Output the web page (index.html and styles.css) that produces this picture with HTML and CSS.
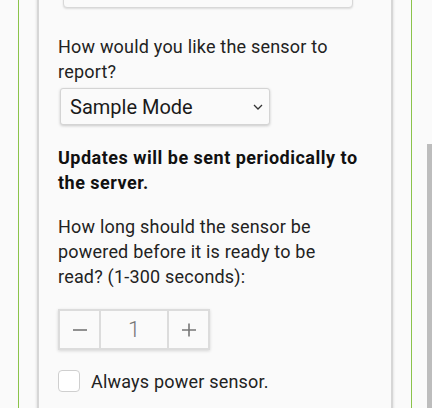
FILE: index.html
```html
<!DOCTYPE html>
<html lang="en">
<head>
    <meta charset="UTF-8">
    <meta name="viewport" content="width=device-width, initial-scale=1.0">
    <title>Sensor Settings</title>
    <link rel="stylesheet" href="styles.css">
</head>
<body>
    <div class="frame">
        <div class="card">
            <div class="field">
                <input type="text" class="text-input" value="">
            </div>
            <div class="field field-select">
                <label class="label" for="mode">How would you like the sensor to report?</label>
                <div class="select-wrap">
                    <select id="mode" class="select">
                        <option>Sample Mode</option>
                        <option>Trigger Mode</option>
                    </select>
                    <svg class="chevron" width="10" height="6" viewBox="0 0 10 6"><path d="M1 1l4 4 4-4" fill="none" stroke="#333" stroke-width="1.3"/></svg>
                </div>
            </div>
            <p class="note">Updates will be sent periodically to the server.</p>
            <p class="label">How long should the sensor be powered before it is ready to be read? (1-300 seconds):</p>
            <div class="stepper">
                <button class="step" aria-label="decrease">
                    <svg width="14" height="14" viewBox="0 0 14 14"><path d="M0 7h14" stroke="#777" stroke-width="1.6"/></svg>
                </button>
                <span class="step-value">1</span>
                <button class="step" aria-label="increase">
                    <svg width="14" height="14" viewBox="0 0 14 14"><path d="M0 7h14M7 0.5v13" stroke="#777" stroke-width="1.6"/></svg>
                </button>
            </div>
            <label class="check">
                <span class="box"></span>
                Always power sensor.
            </label>
        </div>
    </div>
    <div class="scroll-thumb"></div>
</body>
</html>
```

FILE: styles.css
```css
body {
    margin: 0;
    background: #fafafa;
    font-family: Roboto, 'Noto Sans', sans-serif;
    color: #212121;
    overflow: hidden;
}
.frame {
    margin: -40px 18px 0 18px;
    width: 394px;
    border-left: 1px solid #8bc34a;
    border-right: 1px solid #8bc34a;
    padding: 0 18px;
    height: 500px;
    box-sizing: border-box;
}
.card {
    border-left: 2px solid #d6d6d6;
    border-right: 2px solid #d6d6d6;
    box-shadow: 1px 0 2px rgba(0, 0, 0, 0.08), -1px 0 2px rgba(0, 0, 0, 0.08);
    padding: 0 29px 0 19px;
    height: 100%;
    background: #fafafa;
}
.field {
    margin-bottom: 26px;
}
.field-select {
    margin-bottom: 0;
}
.text-input {
    display: block;
    margin-left: 5px;
    width: 290px;
    height: 48px;
    box-sizing: border-box;
    border: 1px solid #d8d8d8;
    border-radius: 4px;
    background: #fafafa;
    box-shadow: 0 1px 2px rgba(0, 0, 0, 0.12);
}
.label {
    display: block;
    margin: 0;
    font-size: 18px;
    line-height: 25px;
    letter-spacing: 0.2px;
    color: #222;
}
.select-wrap {
    position: relative;
    width: 210px;
    margin-left: 2px;
    margin-top: 4px;
}
.select {
    appearance: none;
    width: 100%;
    height: 37px;
    border: 1px solid #d4d4d4;
    border-radius: 3px;
    background: #fafafa;
    box-shadow: 0 1px 3px rgba(0, 0, 0, 0.2);
    font-family: Roboto, sans-serif;
    font-size: 20px;
    color: #1a1a1a;
    padding: 0 9px;
}
.chevron {
    position: absolute;
    right: 7px;
    top: 16px;
}
.note {
    margin: 20px 0 19px;
    font-size: 18px;
    font-weight: bold;
    line-height: 25px;
    letter-spacing: 0.5px;
    color: #111;
}
.stepper {
    display: flex;
    width: 152px;
    height: 41px;
    margin-top: 20px;
    box-sizing: border-box;
    border: 2px solid #dcdcdc;
    background: #dcdcdc;
    gap: 2px;
    box-shadow: 0 1px 3px rgba(0, 0, 0, 0.15);
}
.step, .step-value {
    background: #fafafa;
    border: none;
    padding: 0;
    font-family: Roboto, sans-serif;
    font-size: 22px;
    font-weight: 300;
    color: #777;
    display: flex;
    align-items: center;
    justify-content: center;
}
.step {
    width: 39px;
}
.step-value {
    flex: 1;
}
.check {
    display: flex;
    align-items: center;
    gap: 11px;
    margin-top: 20px;
    font-size: 18px;
    letter-spacing: 0.2px;
    color: #222;
}
.box {
    width: 22px;
    height: 22px;
    box-sizing: border-box;
    border: 1.5px solid #cfcfcf;
    border-radius: 4px;
    background: #fff;
}
.scroll-thumb {
    position: absolute;
    right: 0;
    top: 144px;
    width: 5px;
    height: 264px;
    background: #bdbdbd;
}
```
